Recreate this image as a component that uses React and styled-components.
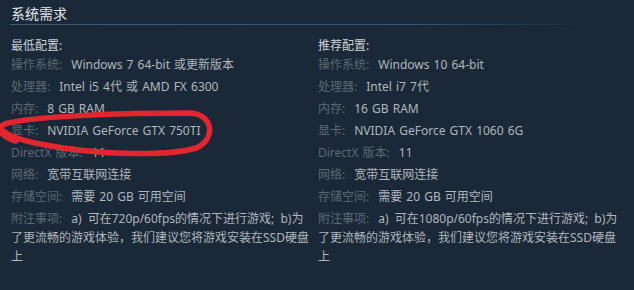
import React from "react";
import styled, { createGlobalStyle } from "styled-components";

const GlobalStyle = createGlobalStyle`
  html, body {
    margin: 0;
    padding: 0;
    background: #1b2838;
  }
  body {
    font-family: "Noto Sans", "Noto Sans CJK SC", sans-serif;
  }
`;

const Section = styled.section`
  position: relative;
  padding: 4px 0 0 10px;
  width: 634px;
  height: 290px;
  box-sizing: border-box;
  overflow: hidden;
`;

const Title = styled.h2`
  margin: 0;
  padding-left: 1px;
  font-size: 14px;
  line-height: 20px;
  font-weight: 400;
  color: #e2e6ea;
`;

const Rule = styled.div`
  width: 572px;
  height: 1px;
  background: linear-gradient(to right, #3d5b74 0%, #3a566e 70%, rgba(58, 86, 110, 0) 100%);
`;

const Columns = styled.div`
  display: grid;
  grid-template-columns: 300px 300px;
  column-gap: 7px;
  margin-top: 11px;
  padding-left: 1px;
`;

const Column = styled.div`
  font-size: 12px;
  line-height: 19px;
  color: #b0b7bd;
  word-spacing: 1px;
`;

const Heading = styled.div`
  color: #c9d0d6;
`;

const Row = styled.div`
  word-spacing: ${(p) => (p.$note ? "3px" : "1px")};
  & + & {
    margin-top: 3px;
  }
`;

const Label = styled.span`
  color: #5b6874;
  margin-right: 9px;
  word-spacing: 1px;
`;

const Annotation = styled.svg`
  position: absolute;
  left: 0;
  top: 100px;
  pointer-events: none;
`;

const minimum = [
  ["操作系统:", "Windows 7 64-bit 或更新版本"],
  ["处理器:", "Intel i5 4代 或 AMD FX 6300"],
  ["内存:", "8 GB RAM"],
  ["显卡:", "NVIDIA GeForce GTX 750TI"],
  ["DirectX 版本:", "11"],
  ["网络:", "宽带互联网连接"],
  ["存储空间:", "需要 20 GB 可用空间"],
  ["附注事项:", "a) 可在720p/60fps的情况下进行游戏; b)为了更流畅的游戏体验，我们建议您将游戏安装在SSD硬盘上"],
];

const recommended = [
  ["操作系统:", "Windows 10 64-bit"],
  ["处理器:", "Intel i7 7代"],
  ["内存:", "16 GB RAM"],
  ["显卡:", "NVIDIA GeForce GTX 1060 6G"],
  ["DirectX 版本:", "11"],
  ["网络:", "宽带互联网连接"],
  ["存储空间:", "需要 20 GB 可用空间"],
  ["附注事项:", "a) 可在1080p/60fps的情况下进行游戏; b)为了更流畅的游戏体验，我们建议您将游戏安装在SSD硬盘上"],
];

function Spec({ heading, rows }) {
  return (
    <Column>
      <Heading>{heading}</Heading>
      {rows.map(([label, value]) => (
        <Row key={label} $note={label === "附注事项:"}>
          <Label>{label}</Label>
          {value}
        </Row>
      ))}
    </Column>
  );
}

export default function App() {
  return (
    <>
      <GlobalStyle />
      <Section>
        <Title>系统需求</Title>
        <Rule />
        <Columns>
          <Spec heading="最低配置:" rows={minimum} />
          <Spec heading="推荐配置:" rows={recommended} />
        </Columns>
        <Annotation width="220" height="64" viewBox="0 100 220 64">
          <path
            d="M 16 141 C 2 137, -8 127, 8 123 C 40 116, 120 113, 190 113 C 214 114, 216 140, 196 148 C 170 156, 100 156, 40 144 C 24 141, 10 137, 2 130"
            fill="none"
            stroke="#e2262f"
            strokeWidth="5.5"
            strokeLinecap="round"
            strokeLinejoin="round"
          />
        </Annotation>
      </Section>
    </>
  );
}
